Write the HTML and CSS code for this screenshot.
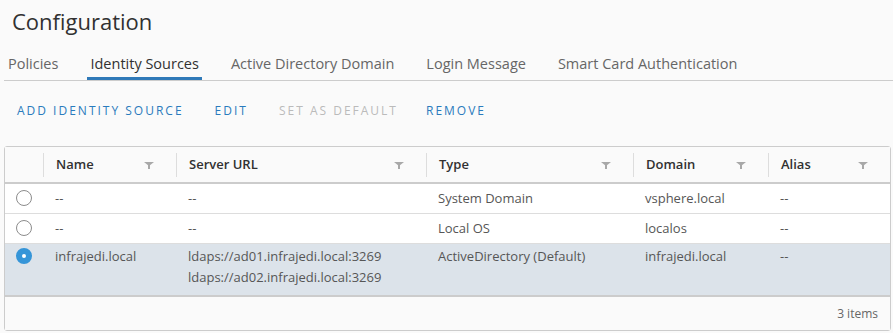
FILE: index.html
```html
<!DOCTYPE html>
<html lang="en">
<head>
    <meta charset="UTF-8">
    <title>Configuration</title>
    <link rel="stylesheet" href="styles.css">
</head>
<body>
    <h1 class="title">Configuration</h1>
    <nav class="tabs">
        <a class="tab">Policies</a>
        <a class="tab active">Identity Sources</a>
        <a class="tab">Active Directory Domain</a>
        <a class="tab">Login Message</a>
        <a class="tab">Smart Card Authentication</a>
    </nav>
    <div class="actions">
        <button class="action">Add Identity Source</button>
        <button class="action">Edit</button>
        <button class="action disabled">Set as Default</button>
        <button class="action">Remove</button>
    </div>
    <div class="grid">
        <div class="row header">
            <div class="cell select"></div>
            <div class="cell name">Name<span class="filter"></span></div>
            <div class="cell url">Server URL<span class="filter"></span></div>
            <div class="cell type">Type<span class="filter"></span></div>
            <div class="cell domain">Domain<span class="filter"></span></div>
            <div class="cell alias">Alias<span class="filter"></span></div>
        </div>
        <div class="row">
            <div class="cell select"><span class="radio"></span></div>
            <div class="cell name">--</div>
            <div class="cell url">--</div>
            <div class="cell type">System Domain</div>
            <div class="cell domain">vsphere.local</div>
            <div class="cell alias">--</div>
        </div>
        <div class="row">
            <div class="cell select"><span class="radio"></span></div>
            <div class="cell name">--</div>
            <div class="cell url">--</div>
            <div class="cell type">Local OS</div>
            <div class="cell domain">localos</div>
            <div class="cell alias">--</div>
        </div>
        <div class="row selected">
            <div class="cell select"><span class="radio checked"></span></div>
            <div class="cell name">infrajedi.local</div>
            <div class="cell url">
                <div class="line">ldaps://ad01.infrajedi.local:3269</div>
                <div class="line">ldaps://ad02.infrajedi.local:3269</div>
            </div>
            <div class="cell type">ActiveDirectory (Default)</div>
            <div class="cell domain">infrajedi.local</div>
            <div class="cell alias">--</div>
        </div>
        <div class="footer">3 items</div>
    </div>
</body>
</html>
```

FILE: styles.css
```css
body {
    margin: 0;
    background-color: #fafafa;
    font-family: "Open Sans", Arial, sans-serif;
    color: #565656;
}
.title {
    margin: 0;
    padding: 6px 0 0 12px;
    height: 34px;
    font-size: 22px;
    font-weight: 400;
    color: #313131;
    line-height: 30px;
}
.tabs {
    display: flex;
    gap: 26px;
    margin: 10px 0 0 4px;
    padding-left: 1px;
    border-bottom: 1px solid #ccc;
}
.tab {
    padding: 0 3px;
    height: 30px;
    line-height: 27px;
    font-size: 14.5px;
    color: #666;
    box-sizing: border-box;
}
.tab.active {
    color: #313131;
    border-bottom: 3px solid #2f79b8;
}
.actions {
    display: flex;
    margin: 17px 0 0 5px;
    height: 24px;
}
.action {
    background: none;
    border: none;
    padding: 0 12px;
    margin-right: 7px;
    font-family: inherit;
    font-size: 12px;
    font-weight: 500;
    letter-spacing: 2px;
    text-transform: uppercase;
    color: #2a7bbd;
    cursor: pointer;
}
.action.disabled {
    color: #bbb;
    margin-right: 4px;
}
.grid {
    margin: 24px 2px 0 4px;
    border: 1px solid #ccc;
    border-radius: 3px;
    font-size: 13px;
}
.row {
    display: flex;
    background-color: #fff;
    border-bottom: 1px solid #ddd;
}
.row.header {
    background-color: #fafafa;
    border-bottom: 2px solid #ccc;
    height: 35px;
    align-items: center;
    font-weight: 600;
    color: #313131;
}
.row.selected {
    background-color: #dce3ea;
    border-bottom: 2px solid #ccc;
    height: 51px;
}
.cell {
    box-sizing: border-box;
    padding: 6px 12px 6px;
    line-height: 17px;
    position: relative;
}
.header .cell {
    height: 24px;
    padding: 3px 12px;
    border-left: 1px solid #ddd;
}
.header .cell.select {
    border-left: none;
}
.select { width: 38px; padding: 6px 0 0 11px; }
.name { width: 133px; }
.url { width: 250px; }
.type { width: 207px; }
.domain { width: 135px; }
.alias { flex: 1; }
.filter {
    position: absolute;
    right: 22px;
    top: 9px;
    width: 0;
    height: 0;
    border-left: 5px solid transparent;
    border-right: 5px solid transparent;
    border-top: 4px solid #a8a8a8;
}
.filter::after {
    content: "";
    position: absolute;
    left: -1px;
    top: -1px;
    width: 2px;
    height: 4px;
    background-color: #a8a8a8;
}
.radio {
    display: block;
    width: 16px;
    height: 16px;
    border: 1px solid #8c8c8c;
    border-radius: 50%;
    box-sizing: border-box;
    background-color: #fff;
}
.radio.checked {
    border: 6px solid #3595d8;
}
.line {
    margin-bottom: 4px;
}
.selected .cell {
    padding-top: 4px;
}
.footer {
    height: 33px;
    line-height: 34px;
    text-align: right;
    padding-right: 12px;
    font-size: 12px;
    color: #666;
    background-color: #fafafa;
}
```
